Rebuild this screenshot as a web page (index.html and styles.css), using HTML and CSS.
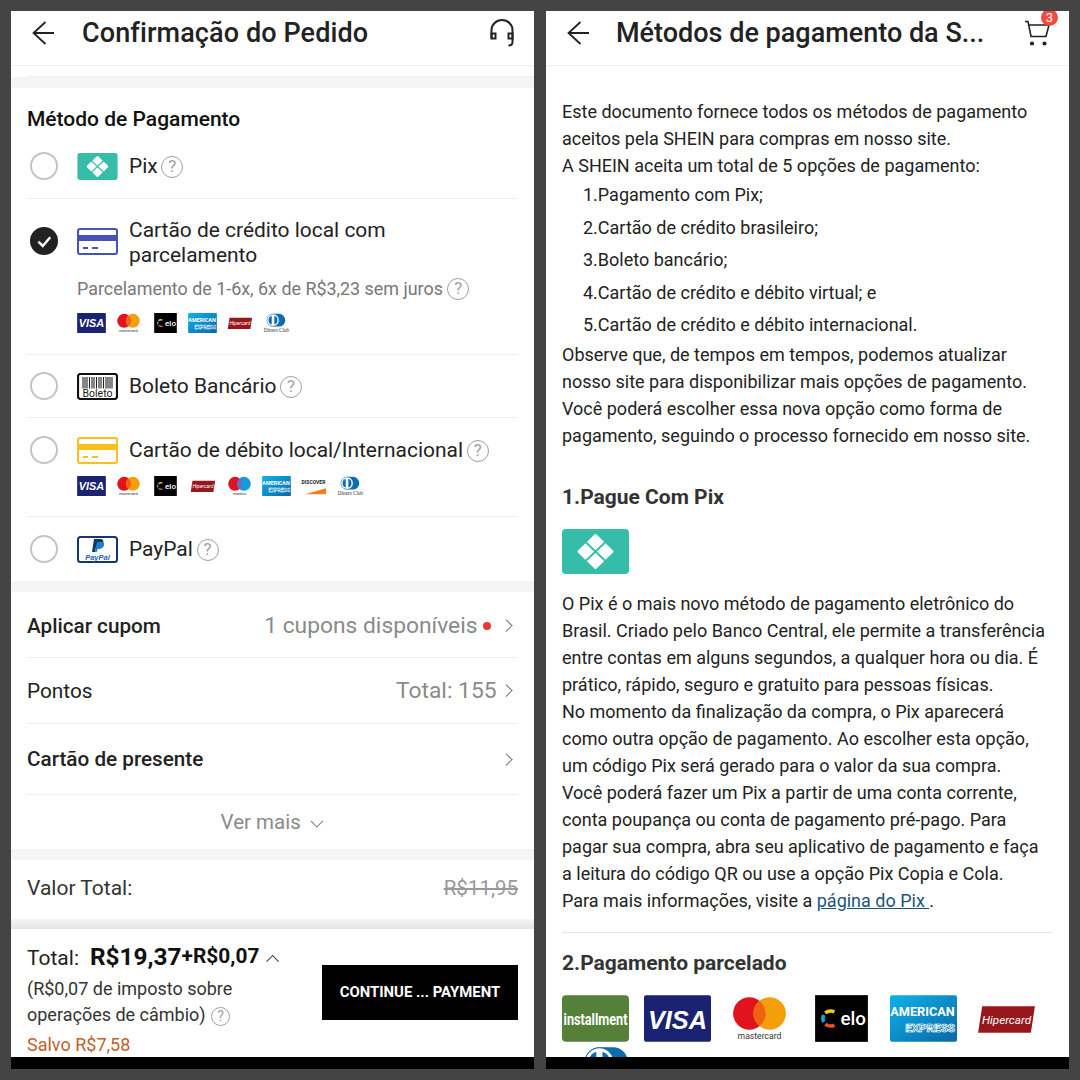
FILE: index.html
```html
<!DOCTYPE html>
<html lang="pt-BR">
  <head>
    <meta charset="UTF-8" />
    <meta name="viewport" content="width=device-width, initial-scale=1.0" />
    <title>Métodos de pagamento</title>
    <link rel="stylesheet" href="styles.css">
  </head>
  <body>
    <svg class="grads" aria-hidden="true">
      <defs>
        <linearGradient id="amexfill" x1="0" y1="0" x2="1" y2="1">
          <stop offset="0" stop-color="#0fb2ea" />
          <stop offset="1" stop-color="#0a67a5" />
        </linearGradient>
      </defs>
    </svg>
    <!-- shared logos -->
    <svg class="defs" aria-hidden="true">
      <symbol id="pix" viewBox="0 0 67 45">
        <rect width="67" height="45" rx="4" fill="#35bdaa" />
        <path d="M33.500 6.500 50 22.500 33.500 38.500 17 22.500Z" fill="#fff" stroke="#fff" stroke-width="3" stroke-linejoin="round" />
        <path d="M23 12.500 44 32.500M44 12.500 23 32.500" stroke="#35bdaa" stroke-width="1.800" />
      </symbol>
      <symbol id="visa" viewBox="0 0 66 46">
        <rect width="66" height="46" rx="2" fill="#1a2272" />
        <text x="33" y="33" text-anchor="middle" class="logo-visa">VISA</text>
      </symbol>
      <symbol id="master" viewBox="0 0 66 46">
        <circle cx="23" cy="18" r="16" fill="#e2131d" />
        <circle cx="43" cy="18" r="16" fill="#f59e0b" />
        <path d="M33 5.500a16 16 0 0 1 0 25a16 16 0 0 1 0-25Z" fill="#ee6310" />
        <text x="33" y="43" text-anchor="middle" class="logo-master">mastercard</text>
      </symbol>
      <symbol id="maestro" viewBox="0 0 66 46">
        <circle cx="23" cy="18" r="16" fill="#e2131d" />
        <circle cx="43" cy="18" r="16" fill="#119bd8" />
        <path d="M33 5.500a16 16 0 0 1 0 25a16 16 0 0 1 0-25Z" fill="#6c6bbd" />
        <text x="33" y="43" text-anchor="middle" class="logo-master">maestro</text>
      </symbol>
      <symbol id="elo" viewBox="0 0 66 46">
        <rect x="7" width="52" height="46" fill="#000" />
        <path d="M26 16.500a8.500 8.500 0 0 0-9 1" fill="none" stroke="#f8c512" stroke-width="3.500" />
        <path d="M15.500 19.500a8.500 8.500 0 0 0 0 7" fill="none" stroke="#19a3dd" stroke-width="3.500" />
        <path d="M17 28.500a8.500 8.500 0 0 0 9 1" fill="none" stroke="#ea4e2a" stroke-width="3.500" />
        <text x="44.500" y="29.500" text-anchor="middle" class="logo-elo">elo</text>
      </symbol>
      <symbol id="amex" viewBox="0 0 66 46">
        <rect width="66" height="46" rx="2" fill="url(#amexfill)" />
        <text x="32" y="21" text-anchor="middle" class="logo-amex">AMERICAN</text>
        <text x="39.500" y="36" text-anchor="middle" class="logo-express">EXPRESS</text>
      </symbol>
      <symbol id="hiper" viewBox="0 0 66 46">
        <path d="M10 11H62L58 37H6Z" fill="#97181c" />
        <text x="34" y="28.500" text-anchor="middle" class="logo-hiper">Hipercard</text>
      </symbol>
      <symbol id="discover" viewBox="0 0 66 46">
        <text x="33" y="18" text-anchor="middle" class="logo-discover">DISCOVER</text>
        <path d="M14 42 62 28V42Z" fill="#ef7e22" />
      </symbol>
      <symbol id="diners" viewBox="0 0 66 46">
        <rect x="11" y="2" width="42" height="29" rx="14.500" fill="#0b6db0" />
        <circle cx="25" cy="16.500" r="14" fill="#fff" stroke="#0b6db0" />
        <path d="M22 6.500v20a10.500 10.500 0 0 1 0-20ZM28 6.500a10.500 10.500 0 0 1 0 20Z" fill="#0b6db0" />
        <text x="33" y="43" text-anchor="middle" class="logo-diners">Diners Club</text>
      </symbol>
    </svg>

    <main class="phone">
      <header class="topbar">
        <svg class="back" viewBox="0 0 24 24"><path d="M23 12H2.500M14.500 1 2.500 12 14.500 23" /></svg>
        <h1 class="title title-order">Confirmação do Pedido</h1>
        <svg class="headset" viewBox="0 0 24 28">
          <path d="M1.500 19V11a10.500 10 0 0 1 21 0V23c0 2-1 3.500-4 3.500" />
          <rect x="1.500" y="14.500" width="4" height="5" />
          <rect x="18.500" y="14.500" width="4" height="5" />
        </svg>
      </header>
      <div class="stub"></div>
      <div class="gap"></div>

      <section class="payments">
        <h2 class="section-title">Método de Pagamento</h2>
        <div class="pay pay-pix">
          <span class="radio"></span>
          <svg class="pay-icon"><use href="#pix" /></svg>
          <span class="pay-name">Pix <span class="help">?</span></span>
        </div>
        <div class="pay pay-credit">
          <span class="radio checked">
            <svg viewBox="0 0 16 16"><path d="M3.500 8.500 7 12 13 5" /></svg>
          </span>
          <svg class="pay-icon" viewBox="0 0 41 27">
            <rect x="1" y="1" width="39" height="25" rx="2" fill="none" stroke="#4553b8" stroke-width="2" />
            <rect x="1" y="7" width="39" height="6" fill="#4553b8" />
            <path d="M6 20h5M15 20h6" stroke="#4553b8" stroke-width="2" />
          </svg>
          <span class="pay-name">Cartão de crédito local com parcelamento</span>
          <p class="pay-note">Parcelamento de 1-6x, 6x de R$3,23 sem juros <span class="help">?</span></p>
          <div class="brands">
            <svg><use href="#visa" /></svg>
            <svg><use href="#master" /></svg>
            <svg><use href="#elo" /></svg>
            <svg><use href="#amex" /></svg>
            <svg><use href="#hiper" /></svg>
            <svg><use href="#diners" /></svg>
          </div>
        </div>
        <div class="pay pay-boleto">
          <span class="radio"></span>
          <svg class="pay-icon" viewBox="0 0 41 27">
            <rect x="1" y="1" width="39" height="25" rx="2.500" fill="#fff" stroke="#111" stroke-width="2.200" />
            <path d="M6 4v11.500M8 4v11.500M10 4v11.500M12.500 4v11.500M15 4v11.500M17 4v11.500M19.500 4v11.500M22 4v11.500M24 4v11.500M26.500 4v11.500M29 4v11.500M31 4v11.500M33 4v11.500M35 4v11.500" stroke="#222" stroke-width="1.100" />
            <text x="20.500" y="24" text-anchor="middle" class="boleto-word">Boleto</text>
          </svg>
          <span class="pay-name">Boleto Bancário <span class="help">?</span></span>
        </div>
        <div class="pay pay-debit">
          <span class="radio"></span>
          <svg class="pay-icon" viewBox="0 0 41 27">
            <rect x="1" y="1" width="39" height="25" rx="2" fill="none" stroke="#fbbf1a" stroke-width="2" />
            <rect x="1" y="7" width="39" height="6" fill="#fbbf1a" />
            <path d="M6 20h5M15 20h6" stroke="#fbbf1a" stroke-width="2" />
          </svg>
          <span class="pay-name">Cartão de débito local/Internacional <span class="help">?</span></span>
          <div class="brands">
            <svg><use href="#visa" /></svg>
            <svg><use href="#master" /></svg>
            <svg><use href="#elo" /></svg>
            <svg><use href="#hiper" /></svg>
            <svg><use href="#maestro" /></svg>
            <svg><use href="#amex" /></svg>
            <svg><use href="#discover" /></svg>
            <svg><use href="#diners" /></svg>
          </div>
        </div>
        <div class="pay pay-paypal">
          <span class="radio"></span>
          <svg class="pay-icon" viewBox="0 0 41 27">
            <rect x="1" y="1" width="39" height="25" rx="2.500" fill="#fff" stroke="#12386f" stroke-width="2" />
            <path d="M17 3h6c3 0 4 2 3 4.500s-3 3.500-5 3.500h-2l-1 5h-3Z" fill="#12386f" />
            <path d="M20 6h5c2 0 2.500 1.500 2 3.500s-3 3.500-5 3.500h-1.500l-.7 3H18Z" fill="#1f80c8" />
            <text x="20.500" y="23.500" text-anchor="middle" class="paypal-word">PayPal</text>
          </svg>
          <span class="pay-name">PayPal <span class="help">?</span></span>
        </div>
      </section>
      <div class="gap"></div>

      <section class="options">
        <div class="option option-coupon">
          <span class="option-name">Aplicar cupom</span>
          <span class="option-value">1 cupons disponíveis<i class="dot"></i><i class="chevron"></i></span>
        </div>
        <div class="option option-points">
          <span class="option-label">Pontos</span>
          <span class="option-value">Total: 155<i class="chevron near"></i></span>
        </div>
        <div class="option option-gift">
          <span class="option-name">Cartão de presente</span>
          <span class="option-value"><i class="chevron"></i></span>
        </div>
        <div class="more">Ver mais <i class="chevron down"></i></div>
      </section>
      <div class="gap"></div>

      <section class="sum">
        <span>Valor Total:</span>
        <s class="old-price">R$11,95</s>
      </section>
      <div class="gap gap-shadow"></div>

      <footer class="checkout">
        <div class="totals">
          <div class="total-line">
            <span class="total-label">Total:</span>
            <strong class="total-price">R$19,37</strong><strong class="total-tax">+R$0,07</strong>
            <i class="chevron up"></i>
          </div>
          <p class="tax-note">(R$0,07 de imposto sobre operações de câmbio) <span class="help">?</span></p>
          <p class="saved">Salvo R$7,58</p>
        </div>
        <a class="pay-btn">CONTINUE ... PAYMENT</a>
      </footer>
      <div class="navbar"></div>
    </main>

    <main class="phone">
      <header class="topbar">
        <svg class="back back-doc" viewBox="0 0 24 24"><path d="M23 12H2.500M14.500 1 2.500 12 14.500 23" /></svg>
        <h1 class="title">Métodos de pagamento da S...</h1>
        <div class="cart">
          <svg viewBox="0 0 26 26">
            <path d="M1 1.500h3l3 15h15L25 5H4.500" />
            <circle cx="8" cy="23.500" r="1.300" />
            <circle cx="20.500" cy="23.500" r="1.300" />
          </svg>
          <span class="badge">3</span>
        </div>
      </header>

      <article class="doc">
        <p>Este documento fornece todos os métodos de pagamento aceitos pela SHEIN para compras em nosso site.</p>
        <p>A SHEIN aceita um total de 5 opções de pagamento:</p>
        <ol class="doc-list">
          <li>1.Pagamento com Pix;</li>
          <li>2.Cartão de crédito brasileiro;</li>
          <li>3.Boleto bancário;</li>
          <li>4.Cartão de crédito e débito virtual; e</li>
          <li>5.Cartão de crédito e débito internacional.</li>
        </ol>
        <p>Observe que, de tempos em tempos, podemos atualizar nosso site para disponibilizar mais opções de pagamento. Você poderá escolher essa nova opção como forma de pagamento, seguindo o processo fornecido em nosso site.</p>

        <h2 class="doc-title">1.Pague Com Pix</h2>
        <svg class="doc-pix"><use href="#pix" /></svg>
        <p>O Pix é o mais novo método de pagamento eletrônico do Brasil. Criado pelo Banco Central, ele permite a transferência entre contas em alguns segundos, a qualquer hora ou dia. É prático, rápido, seguro e gratuito para pessoas físicas.</p>
        <p>No momento da finalização da compra, o Pix aparecerá como outra opção de pagamento. Ao escolher esta opção, um código Pix será gerado para o valor da sua compra. Você poderá fazer um Pix a partir de uma conta corrente, conta poupança ou conta de pagamento pré-pago. Para pagar sua compra, abra seu aplicativo de pagamento e faça a leitura do código QR ou use a opção Pix Copia e Cola.</p>
        <p>Para mais informações, visite a <a class="doc-link">página do Pix </a>.</p>

        <hr class="doc-rule" />
        <h2 class="doc-title doc-title-2">2.Pagamento parcelado</h2>
        <div class="doc-brands">
          <svg viewBox="0 0 66 46">
            <rect width="66" height="46" rx="4" fill="#55803a" />
            <text transform="translate(33 29) scale(0.78 1)" text-anchor="middle" class="logo-install">installment</text>
          </svg>
          <svg><use href="#visa" /></svg>
          <svg><use href="#master" /></svg>
          <svg><use href="#elo" /></svg>
          <svg><use href="#amex" /></svg>
          <svg><use href="#hiper" /></svg>
          <svg class="doc-diners"><use href="#diners" /></svg>
        </div>
      </article>
      <div class="navbar"></div>
    </main>
  </body>
</html>
```

FILE: styles.css
```css
* {
  box-sizing: border-box;
}
html,
body {
  margin: 0;
  height: 1080px;
  overflow: hidden;
}
body {
  display: flex;
  gap: 12px;
  padding: 11px;
  background-color: #444;
  font-family: Roboto, "Liberation Sans", sans-serif;
  color: #222;
}
p,
h1,
h2,
ol {
  margin: 0;
  padding: 0;
}
i {
  font-style: normal;
}
.defs {
  display: none;
}
.grads {
  position: absolute;
  width: 0;
  height: 0;
}
.phone {
  display: flex;
  flex-direction: column;
  width: 523px;
  height: 1058px;
  overflow: hidden;
  background-color: #fff;
}

/* top bar */
.topbar {
  display: flex;
  flex: none;
  align-items: center;
  height: 55px;
  padding: 0 0 10px 20px;
  border-bottom: 1px solid #eee;
}
.back {
  flex: none;
  width: 24px;
  height: 24px;
  margin-right: 27px;
  fill: none;
  stroke: #222;
  stroke-width: 1.800;
}
.back-doc {
  margin-right: 26px;
}
.title {
  flex: 1;
  font-size: 27px;
  font-weight: 500;
  color: #222;
}
.title-order {
  letter-spacing: 0.1px;
}
.headset {
  width: 24px;
  height: 28px;
  margin-right: 20px;
  fill: none;
  stroke: #222;
  stroke-width: 2;
}
.cart {
  position: relative;
  width: 26px;
  height: 26px;
  margin-right: 19px;
}
.cart svg {
  display: block;
  fill: none;
  stroke: #222;
  stroke-width: 1.600;
}
.cart circle {
  fill: #222;
}
.badge {
  position: absolute;
  top: -11px;
  right: -8px;
  width: 17px;
  height: 17px;
  border-radius: 50%;
  background-color: #f04b3f;
  color: #fff;
  font-size: 13px;
  line-height: 17px;
  text-align: center;
}
.stub {
  flex: none;
  height: 11px;
  margin-left: 16px;
  border-bottom: 1px solid #eee;
}
.gap {
  flex: none;
  height: 11px;
  background-color: #f5f5f5;
}
.gap-shadow {
  height: 10px;
  background: linear-gradient(#f5f5f5, #e4e4e4);
}

/* payment methods */
.payments {
  flex: none;
  padding: 0 16px;
}
.section-title {
  padding-top: 19px;
  font-size: 21px;
  line-height: 25px;
  font-weight: 500;
  color: #111;
}
.pay {
  display: grid;
  grid-template-columns: 50px 52px 1fr;
  align-items: center;
  border-bottom: 1px solid #eee;
}
.pay:last-child {
  border-bottom: none;
}
.pay-pix {
  height: 67px;
  padding-top: 2px;
}
.pay-credit {
  height: 156px;
  align-content: start;
  padding-top: 19px;
}
.pay-credit .radio,
.pay-credit .pay-icon {
  margin-bottom: 4px;
}
.pay-boleto {
  height: 63px;
}
.pay-debit {
  height: 99px;
  align-content: start;
  padding-top: 18px;
}
.pay-paypal {
  height: 64px;
}
.radio {
  display: flex;
  align-items: center;
  justify-content: center;
  width: 28px;
  height: 28px;
  margin-left: 3px;
  border: 2px solid #c4c4c4;
  border-radius: 50%;
}
.radio.checked {
  border-color: #222;
  background-color: #222;
}
.radio svg {
  width: 20px;
  height: 20px;
  fill: none;
  stroke: #fff;
  stroke-width: 2;
}
.pay-icon {
  width: 41px;
  height: 27px;
}
.pay-name {
  font-size: 20.950px;
  line-height: 25px;
  color: #222;
}
.pay-name .help {
  margin-left: -1.500px;
}
.pay-note {
  grid-column: 2 / 4;
  margin-top: 9px;
  font-size: 17.900px;
  line-height: 24px;
  color: #777;
}
.brands {
  display: flex;
  grid-column: 2 / 4;
  gap: 8px;
  margin-top: 12px;
}
.brands svg {
  width: 29px;
  height: 20px;
}
.help {
  display: inline-block;
  width: 22px;
  height: 22px;
  border: 1.500px solid #a0a0a0;
  border-radius: 50%;
  color: #a0a0a0;
  font-size: 17px;
  line-height: 19px;
  text-align: center;
  vertical-align: 1px;
}

/* coupons and points */
.options {
  flex: none;
  padding: 0 16px;
}
.option {
  display: flex;
  align-items: center;
  justify-content: space-between;
  border-bottom: 1px solid #eee;
}
.option-coupon {
  height: 66px;
  padding-top: 2px;
}
.option-points {
  height: 66px;
}
.option-gift {
  height: 71px;
}
.option-name {
  font-size: 20.700px;
  font-weight: 500;
  color: #222;
}
.option-label {
  font-size: 20.800px;
  color: #222;
}
.option-value {
  display: flex;
  align-items: center;
  font-size: 22.800px;
  color: #8a8a8a;
}
.dot {
  width: 8px;
  height: 8px;
  margin-left: 5px;
  border-radius: 50%;
  background-color: #e8382f;
}
.chevron {
  width: 8.500px;
  height: 8.500px;
  margin: 0 8px 0 11px;
  border-top: 1.600px solid #777;
  border-right: 1.600px solid #777;
  transform: rotate(45deg);
}
.chevron.near {
  margin-left: 5px;
}
.chevron.down {
  display: inline-block;
  margin: 0 3px 4px 7px;
  transform: rotate(135deg);
}
.chevron.up {
  display: inline-block;
  margin: 0 0 5px 9px;
  border-color: #333;
  transform: rotate(-45deg);
}
.more {
  height: 54px;
  font-size: 20.500px;
  line-height: 54px;
  text-align: center;
  color: #8a8a8a;
}
.sum {
  display: flex;
  flex: none;
  align-items: center;
  justify-content: space-between;
  height: 59px;
  padding: 0 16px 4px;
  font-size: 21px;
  color: #333;
}
.old-price {
  font-size: 20.500px;
  color: #999;
}

/* checkout bar */
.checkout {
  display: flex;
  flex: 1;
  align-items: center;
  justify-content: space-between;
  min-height: 0;
  padding: 0 16px;
}
.totals {
  align-self: flex-start;
  margin-top: 13px;
}
.total-line {
  display: flex;
  align-items: baseline;
  height: 28px;
}
.total-label {
  margin-right: 11px;
  font-size: 21px;
}
.total-price {
  font-size: 24.400px;
  color: #111;
}
.total-tax {
  position: relative;
  top: -2px;
  font-size: 20.900px;
  color: #111;
}
.tax-note {
  width: 260px;
  margin-top: 6px;
  font-size: 18px;
  line-height: 26px;
  color: #333;
}
.tax-note .help {
  width: 19px;
  height: 19px;
  margin-left: 1px;
  font-size: 14px;
  line-height: 16px;
  vertical-align: 0;
}
.saved {
  margin-top: 6px;
  font-size: 18px;
  line-height: 22px;
  color: #c0622d;
}
.pay-btn {
  flex: none;
  width: 196px;
  height: 55px;
  margin-bottom: 1px;
  background-color: #000;
  color: #fff;
  font-size: 14.900px;
  font-weight: 700;
  line-height: 55px;
  text-align: center;
}
.navbar {
  flex: none;
  height: 12px;
  background-color: #000;
}

/* document page */
.doc {
  flex: 1;
  min-height: 0;
  overflow: hidden;
  padding: 32px 23.500px 0 16px;
  font-size: 18px;
  line-height: 27px;
  color: #222;
}
.doc-list {
  list-style: none;
  padding-left: 21px;
  margin-bottom: -1px;
}
.doc-list li {
  line-height: 32.500px;
}
.doc-title {
  margin: 35px 0 18px;
  font-size: 21px;
  line-height: 27px;
  font-weight: 700;
  color: #333;
}
.doc-title-2 {
  margin: 17px 0 18px;
}
.doc-pix {
  display: block;
  width: 67px;
  height: 45px;
  margin-bottom: 16px;
}
.doc-link {
  color: #1b5577;
  text-decoration: underline;
}
.doc-rule {
  margin: 18px -7.500px 0 0;
  border: none;
  border-top: 1px solid #e4e4e4;
}
.doc-brands {
  display: flex;
  flex-wrap: wrap;
  gap: 3px 15px;
  margin-right: -7.500px;
}
.doc-brands svg {
  width: 67px;
  height: 47px;
}
.doc-brands .doc-diners {
  margin-left: 12px;
}

/* svg logo text */
.logo-visa {
  font: italic 700 25px "Liberation Sans", sans-serif;
  fill: #fff;
}
.logo-master {
  font: 400 8.500px Roboto, sans-serif;
  fill: #333;
}
.logo-elo {
  font: 500 18.500px Roboto, sans-serif;
  fill: #fff;
}
.logo-amex {
  font: 700 12.500px Roboto, sans-serif;
  fill: #fff;
}
.logo-express {
  font: 700 11.500px Roboto, sans-serif;
  fill: none;
  stroke: #fff;
  stroke-width: 0.700;
}
.logo-hiper {
  font: italic 400 11.500px Roboto, sans-serif;
  fill: #fff;
}
.logo-discover {
  font: 700 11.500px Roboto, sans-serif;
  fill: #222;
}
.logo-diners {
  font: 400 12px "Liberation Serif", serif;
  fill: #333;
}
.logo-install {
  font: 700 16px Roboto, sans-serif;
  fill: #fff;
}
.boleto-word {
  font: 400 10.500px Roboto, sans-serif;
  fill: #222;
}
.paypal-word {
  font: italic 700 7.500px "Liberation Sans", sans-serif;
  fill: #1f5fa8;
}
```
